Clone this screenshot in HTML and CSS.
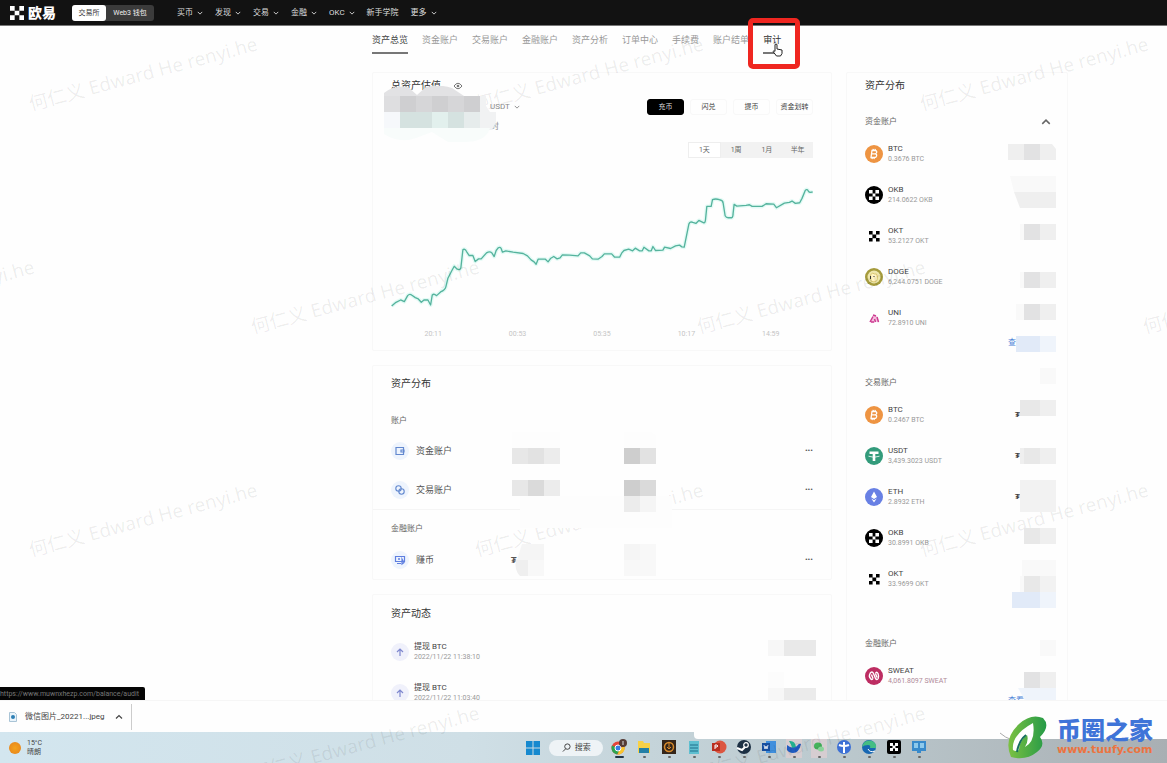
FILE: index.html
```
<!DOCTYPE html>
<html lang="zh-CN">
<head>
    <meta charset="UTF-8">
    <meta name="viewport" content="width=device-width, initial-scale=1.0">
    <title>欧易 - 资产总览</title>
    <link rel="stylesheet" href="styles.css">
</head>
<body>
    <!-- Icons used more than once -->
    <svg class="defs" aria-hidden="true">
        <symbol id="down" viewBox="0 0 8 8"><path d="M1 2.5l3 3 3-3" fill="none" stroke="currentColor" stroke-width="1.2"/></symbol>
        <symbol id="up" viewBox="0 0 8 8"><path d="M1 5.5l3-3 3 3" fill="none" stroke="currentColor" stroke-width="1.2"/></symbol>
        <symbol id="okx" viewBox="0 0 15 15"><path d="M0 0h5v5H0zM10 0h5v5h-5zM5 5h5v5H5zM0 10h5v5H0zM10 10h5v5h-5z"/></symbol>
        <symbol id="btc" viewBox="0 0 18 18">
            <circle cx="9" cy="9" r="9" fill="#ee9442"/>
            <path d="M7 5.5h3.2q1.8.2 1.5 1.8-.3 1.3-1.7 1.5 2 .2 1.6 2-.4 1.7-2.3 1.7H6zM8 5.300l.3-1.500M10 5.300l.3-1.500M7 14l.3-1.500M9 14l.3-1.500M7 8.900h3" fill="none" stroke="#fff" stroke-width="1.300"/>
        </symbol>
        <symbol id="okb" viewBox="0 0 18 18">
            <circle cx="9" cy="9" r="9"/>
            <path d="M4 4h3.600v3.600H4zM10.400 4H14v3.600h-3.600zM7.600 7.600h2.800v2.800H7.600zM4 10.400h3.600V14H4zM10.400 10.400H14V14h-3.600z" fill="#fff"/>
        </symbol>
        <symbol id="okt" viewBox="0 0 18 18">
            <path d="M4 4h3.600v3.600H4zM11 4h3.600v3.600H11zM7.400 7.400h3.800v3.800H7.400zM4 11h3.600v3.600H4zM11 11h3.600v3.600H11z"/>
        </symbol>
        <symbol id="send" viewBox="0 0 18 18">
            <circle cx="9" cy="9" r="9" fill="#f0f1fb"/>
            <path d="M9 13V6M6 9l3-3 3 3" fill="none" stroke="#7f88cf" stroke-width="1.200"/>
        </symbol>
    </svg>

    <header class="topbar">
        <a class="brand" href="#"><svg class="brand-icon"><use href="#okx"/></svg>欧易</a>
        <div class="switch">
            <button class="on">交易所</button>
            <button>Web3 钱包</button>
        </div>
        <nav class="menu">
            <a href="#">买币<svg><use href="#down"/></svg></a>
            <a href="#">发现<svg><use href="#down"/></svg></a>
            <a href="#">交易<svg><use href="#down"/></svg></a>
            <a href="#">金融<svg><use href="#down"/></svg></a>
            <a href="#">OKC<svg><use href="#down"/></svg></a>
            <a href="#">新手学院</a>
            <a href="#">更多<svg><use href="#down"/></svg></a>
        </nav>
    </header>

    <main class="page">
        <nav class="tabs">
            <a class="current" href="#">资产总览</a>
            <a href="#">资金账户</a>
            <a href="#">交易账户</a>
            <a href="#">金融账户</a>
            <a href="#">资产分析</a>
            <a href="#">订单中心</a>
            <a href="#">手续费</a>
            <a href="#">账户结单</a>
            <a class="hovered" href="#">审计
                <span class="highlight"></span>
                <svg class="cursor" viewBox="0 0 12 14"><path d="M3 8V1.500q1-1 2 0V6l5 1v3.500L8.500 13h-4L1 8.500q.8-1.200 2-.2z" fill="#fff" stroke="#222" stroke-width="1"/></svg>
            </a>
        </nav>

        <div class="columns">
            <div class="left">
                <section class="card total">
                    <h2>总资产估值
                        <svg class="eye" viewBox="0 0 10 8"><path d="M1 4q4-5.500 8 0-4 5.500-8 0z" fill="none" stroke="#777" stroke-width="1"/><circle cx="5" cy="4" r="1.300" fill="#777"/></svg>
                    </h2>
                    <div class="total-row">
                        <button class="unit">USDT<svg><use href="#down"/></svg></button>
                        <div class="actions">
                            <button class="dark">充币</button>
                            <button>闪兑</button>
                            <button>提币</button>
                            <button>资金划转</button>
                        </div>
                    </div>
                    <p class="change">24小时</p>
                    <div class="range">
                        <button class="on">1天</button>
                        <button>1周</button>
                        <button>1月</button>
                        <button>半年</button>
                    </div>
                    <svg class="chart" viewBox="63 40 1268 380" preserveAspectRatio="none">
                        <path class="glow" d="M65 408L78 397 92 390 103 395 113 377Q119 370 126 376L136 383 145 387 154 397 162 390H174L182 405 187 375Q192 370 200 377L212 366Q226 360 228 350L234 325 246 302 253 289 262 298Q271 302 273 293L279 240Q284 235 290 245L298 257H309L316 275 326 267H334L350 249Q360 243 366 249L373 260 379 242 385 234Q391 230 394 236L398 247 408 243 430 247 460 251 473 258 484 270 493 276 499 283 505 268H527L535 276 542 266 552 260 562 267 571 264 578 255 600 256 625 258 633 249H644L660 258 668 267 685 268 697 260 704 252H726L735 262 750 262 756 250 763 242 777 238 789 243 797 235 810 243 818 243 823 232 838 243 845 243 850 230 858 242 880 241 885 232 903 236 918 228 930 226 937 231 944 232 958 163Q962 154 970 158L979 161 988 152 1003 159Q1007 160 1008 150L1012 110H1025L1029 90Q1038 86 1050 90 1060 91 1061 100L1067 138Q1070 144 1076 144H1087Q1091 142 1091 130L1094 104 1102 109 1130 107 1140 105 1148 110H1178L1190 102 1213 103 1221 114 1245 100 1260 98 1268 94 1278 101 1291 99 1298 86 1308 62Q1313 56 1318 66L1322 68 1330 67"/>
                        <path d="M65 408L78 397 92 390 103 395 113 377Q119 370 126 376L136 383 145 387 154 397 162 390H174L182 405 187 375Q192 370 200 377L212 366Q226 360 228 350L234 325 246 302 253 289 262 298Q271 302 273 293L279 240Q284 235 290 245L298 257H309L316 275 326 267H334L350 249Q360 243 366 249L373 260 379 242 385 234Q391 230 394 236L398 247 408 243 430 247 460 251 473 258 484 270 493 276 499 283 505 268H527L535 276 542 266 552 260 562 267 571 264 578 255 600 256 625 258 633 249H644L660 258 668 267 685 268 697 260 704 252H726L735 262 750 262 756 250 763 242 777 238 789 243 797 235 810 243 818 243 823 232 838 243 845 243 850 230 858 242 880 241 885 232 903 236 918 228 930 226 937 231 944 232 958 163Q962 154 970 158L979 161 988 152 1003 159Q1007 160 1008 150L1012 110H1025L1029 90Q1038 86 1050 90 1060 91 1061 100L1067 138Q1070 144 1076 144H1087Q1091 142 1091 130L1094 104 1102 109 1130 107 1140 105 1148 110H1178L1190 102 1213 103 1221 114 1245 100 1260 98 1268 94 1278 101 1291 99 1298 86 1308 62Q1313 56 1318 66L1322 68 1330 67"/>
                    </svg>
                    <div class="axis">
                        <span>20:11</span><span>00:53</span><span>05:35</span><span>10:17</span><span>14:59</span>
                    </div>
                    <svg class="mosaic mosaic-total" viewBox="0 0 116 56">
                        <path fill="#e2e2e4" d="M0 10V7Q10-1 24 1L33 9 42 1Q56-2 68 2L80 10z"/>
                        <path fill="#dedee0" d="M0 10h16v16H0z"/><path fill="#cfcfd1" d="M16 10h16v16H16zM48 10h16v16H48zM80 10h16v16H80z"/><path fill="#d6d6d8" d="M32 10h16v16H32zM64 10h16v16H64z"/>
                        <path fill="#f6f8fb" d="M0 26h16v16H0z"/><path fill="#d5e2e0" d="M16 26h32v16H16zM64 26h16v16H64z"/><path fill="#e2f0ed" d="M48 26h16v16H48z"/><path fill="#e6ecec" d="M80 26h16v16H80z"/><path fill="#f1f2f3" d="M96 10h6v10l4 6h6v10l-4 8H96z"/>
                        <path fill="#f8fcfb" d="M0 42h106q-4 14-26 14H64L48 46 32 52q-16 6-32-4z"/>
                    </svg>
                </section>

                <section class="card spread">
                    <h2>资产分布</h2>
                    <h3>账户</h3>
                    <ul>
                        <li>
                            <svg class="round" viewBox="0 0 18 18"><circle cx="9" cy="9" r="9" fill="#eef4fd"/><path d="M5 5.500h7.500v7H5zM10 8h3v2h-3z" fill="none" stroke="#6288cf" stroke-width="1.200"/></svg>
                            <a href="#">资金账户</a><button class="more" aria-label="更多">•••</button>
                        </li>
                        <li>
                            <svg class="round" viewBox="0 0 18 18"><circle cx="9" cy="9" r="9" fill="#eef4fd"/><circle cx="7.500" cy="7.500" r="2.700" fill="none" stroke="#6288cf" stroke-width="1.100"/><circle cx="10.500" cy="10.500" r="2.700" fill="none" stroke="#6288cf" stroke-width="1.100"/></svg>
                            <a href="#">交易账户</a><button class="more" aria-label="更多">•••</button>
                        </li>
                    </ul>
                    <h3 class="ruled">金融账户</h3>
                    <ul>
                        <li>
                            <svg class="round" viewBox="0 0 18 18"><circle cx="9" cy="9" r="9" fill="#eef4fd"/><path d="M4.500 5.500h9v5h-9zM6 12.500h4M11 8v5l2-1.500z" fill="none" stroke="#5f7fe0" stroke-width="1.200"/><circle cx="8" cy="8" r="1" fill="#5f7fe0"/></svg>
                            <a href="#">赚币</a><b>₮</b><button class="more" aria-label="更多">•••</button>
                        </li>
                    </ul>
                    <svg class="mosaic mosaic-spread" viewBox="0 0 176 144">
                        <path fill="#fdfdfd" d="M0 0h48v16H0zM112 0h26l6 4v12h-32zM16 80h144v16H16zM8 64h152v32H8z"/>
                        <path fill="#e7e7e7" d="M0 16h16v16H0zM0 48h16v16H0z"/><path fill="#e2e2e2" d="M16 16h16v16H16zM128 16h16v16h-16z"/><path fill="#ececec" d="M32 16h16v16H32zM32 48h16v16H32zM112 64h16v16h-16z"/><path fill="#dadada" d="M16 48h16v16H16zM128 48h16v16h-16z"/><path fill="#cecece" d="M112 16h16v16h-16zM112 48h16v16h-16z"/><path fill="#f5f5f5" d="M128 64h16v16h-16zM10 112h22v16H5zM112 112h16v16h-16z"/><path fill="#efefef" d="M4 128h12v16H8q-6-6-4-16z"/><path fill="#f8f8f8" d="M16 128h16v16H16zM128 112h16v32h-16zM112 128h16v16h-16z"/>
                    </svg>
                </section>

                <section class="card activity">
                    <h2>资产动态</h2>
                    <ul>
                        <li><svg class="round"><use href="#send"/></svg><div><strong>提现 BTC</strong><time>2022/11/22 11:38:10</time></div></li>
                        <li><svg class="round"><use href="#send"/></svg><div><strong>提现 BTC</strong><time>2022/11/22 11:03:40</time></div></li>
                    </ul>
                    <svg class="mosaic mosaic-activity" viewBox="0 0 48 64">
                        <path fill="#f7f7f7" d="M0 0h16v16H0zM0 48h16v16H0z"/><path fill="#e9e9e9" d="M16 0h32v16H16z"/><path fill="#ebebeb" d="M16 48h32v16H16z"/><path fill="#fcfcfc" d="M0 32h16v16H0z"/>
                    </svg>
                </section>
            </div>

            <aside class="card side">
                <h2>资产分布</h2>
                <section>
                    <h3>资金账户<svg><use href="#up"/></svg></h3>
                    <ul>
                        <li><svg class="coin"><use href="#btc"/></svg><div><strong>BTC</strong><span>0.3676 BTC</span></div></li>
                        <li><svg class="coin"><use href="#okb"/></svg><div><strong>OKB</strong><span>214.0622 OKB</span></div></li>
                        <li><svg class="coin"><use href="#okt"/></svg><div><strong>OKT</strong><span>53.2127 OKT</span></div></li>
                        <li>
                            <svg class="coin" viewBox="0 0 18 18"><circle cx="9" cy="9" r="9" fill="#a59b3c"/><circle cx="9" cy="9" r="6.500" fill="#eee6ad"/><path d="M5.500 7l2-2 2 1h2l1 3-.5 3.500-3 1.500-3-1z" fill="#fff3c4" stroke="#d2bd5d" stroke-width=".8"/><path d="M5 8h1v3H5zM8.500 8h1v1h-1z" fill="#333"/></svg>
                            <div><strong>DOGE</strong><span>6,244.0751 DOGE</span></div>
                        </li>
                        <li>
                            <svg class="coin" viewBox="0 0 18 18"><path d="M5.500 13L8 7.500l2-2 2.500 3 1.500 5-3-1-1.500 1z" fill="#f5c1df"/><path d="M5 13l3-5.500M8 6l3 1M12 8l1.500 5M6 13h3M10.500 13l-1-3" stroke="#cc3b91" stroke-width="1.500" fill="none"/></svg>
                            <div><strong>UNI</strong><span>72.8910 UNI</span></div>
                        </li>
                    </ul>
                    <a class="all" href="#">查看更多资产</a>
                </section>
                <section>
                    <h3>交易账户</h3>
                    <ul>
                        <li><svg class="coin"><use href="#btc"/></svg><div><strong>BTC</strong><span>0.2467 BTC</span></div><b>₮</b></li>
                        <li>
                            <svg class="coin" viewBox="0 0 18 18"><circle cx="9" cy="9" r="9" fill="#339b7b"/><path d="M4.500 4.500h9v2.500h-3.200v7H7.700V7H4.500z" fill="#fff"/><path d="M3.500 9.200q5.500 2.200 11 0" fill="none" stroke="#fff" stroke-width=".8"/></svg>
                            <div><strong>USDT</strong><span>3,439.3023 USDT</span></div><b>₮</b>
                        </li>
                        <li>
                            <svg class="coin" viewBox="0 0 18 18"><circle cx="9" cy="9" r="9" fill="#6880e4"/><path d="M9 3.500l3 5.500-3 2-3-2zM6.300 10.500L9 12.300l2.700-1.800L9 14.500z" fill="#fff"/></svg>
                            <div><strong>ETH</strong><span>2.8932 ETH</span></div><b>₮</b>
                        </li>
                        <li><svg class="coin"><use href="#okb"/></svg><div><strong>OKB</strong><span>30.8991 OKB</span></div></li>
                        <li><svg class="coin"><use href="#okt"/></svg><div><strong>OKT</strong><span>33.9699 OKT</span></div></li>
                    </ul>
                </section>
                <section>
                    <h3>金融账户</h3>
                    <ul>
                        <li>
                            <svg class="coin" viewBox="0 0 18 18"><circle cx="9" cy="9" r="9" fill="#bd2d62"/><path d="M5 6.500q2-3 3.500 0l2 5q1.500 2 2.700 0 1-2-.2-5-1.500-2.500-2.500 0M5 6.500q-1.500 3 .5 5 1.500 2 2.500 0M6.500 7.500l1.500 4M10.500 6.500l1.500 4" fill="none" stroke="#fff" stroke-width="1.400"/></svg>
                            <div><strong>SWEAT</strong><span class="rose">4,061.8097 SWEAT</span></div>
                        </li>
                    </ul>
                    <a class="all" href="#">查看更多资产</a>
                </section>
                <svg class="mosaic mosaic-side" viewBox="0 0 48 560">
                    <path fill="#efefef" d="M0 0h16v16H0zM32 0h12l4 5v11H32zM6 48h42v16H12zM32 80h16v16H32zM32 128h16v16H32zM32 160h16v16H32zM32 256h16v16H32zM12 304h36v16H12zM32 384h16v16H32zM32 528h16v16H32z"/>
                    <path fill="#e2e2e3" d="M16 0h16v16H16zM16 80h16v16H16zM16 128h16v16H16zM16 160h16v16H16zM16 528h16v16H16z"/>
                    <path fill="#e8e8e8" d="M12 256h20v16H12zM16 304h16v16H16zM16 384h16v16H16zM16 432h16v16H16z"/>
                    <path fill="#f9f9f9" d="M2 32h46v16H6zM12 80h4v16h-4zM12 128h4v16h-4zM8 160h8v16H8zM32 224h16v16H32zM14 416h34v16H14zM12 432h4v16h-4zM32 496h16v16H32z"/>
                    <path fill="#f2f2f2" d="M12 336h36v32H12zM32 432h16v16H32z"/>
                    <path fill="#e1eaf8" d="M8 192h24v16H8zM4 448h28v16H4z"/><path fill="#eff4fb" d="M32 192h16v16H32zM32 448h16v16H32zM10 544h38v14H18z"/>
                </svg>
            </aside>
        </div>
        <div class="status">https://www.muwnxhezp.com/balance/audit</div>
    </main>

    <!-- Download shelf -->
    <div class="shelf">
        <a class="file" href="#">
            <svg viewBox="0 0 8 10"><path d="M.5.5h5l2 2v7h-7z" fill="#eaf4fb" stroke="#a9c4d6"/><circle cx="4" cy="5" r="2" fill="#2d7fb5"/></svg>
            微信图片_20221...jpeg
        </a>
        <button aria-label="展开"><svg><use href="#up"/></svg></button>
    </div>

    <footer class="taskbar">
        <div class="weather"><i></i><div>15°C<br>晴朗</div></div>
        <div class="dock">
            <svg viewBox="0 0 16 16"><path d="M1 1h6.500v6.500H1zM8.500 1H15v6.500H8.500zM1 8.500h6.500V15H1zM8.500 8.500H15V15H8.500z" fill="#1689cf"/></svg>
            <button class="search"><svg viewBox="0 0 10 10"><circle cx="6" cy="4" r="3" fill="none" stroke="#333"/><path d="M4 6.500L1 9.500" stroke="#333"/></svg>搜索</button>
            <div class="apps">
                <span class="active"><svg viewBox="0 0 16 16"><circle cx="7" cy="9" r="6.500" fill="#e5453a"/><path d="M1 6.500A6.500 6.500 0 0 0 6 15.400L9.500 10z" fill="#2da44f"/><path d="M13.300 7A6.500 6.500 0 0 1 6.500 15.500L9.500 9z" fill="#f8c52c"/><circle cx="7" cy="9" r="3" fill="#367ee5" stroke="#fff"/><circle cx="12" cy="4" r="4" fill="#553b36"/><path d="M12 2v4" stroke="#ddd"/></svg></span>
                <span><svg viewBox="0 0 16 16"><path d="M2 2h5l1 2h6v10H2z" fill="#f8d146"/><path d="M3 9h10v5H3z" fill="#247fa5"/></svg></span>
                <span><svg viewBox="0 0 16 16"><path d="M1 1h14v14H1z" fill="#35261a"/><circle cx="8" cy="8" r="4.500" fill="none" stroke="#d88b2c" stroke-width="1.500"/><path d="M8 4v6M6 8l2 2 2-2" fill="none" stroke="#d88b2c"/></svg></span>
                <span><svg viewBox="0 0 16 16"><path d="M3 2h10v13H3z" fill="#5fbfd0"/><path d="M4 6h8M4 9h8M4 12h8" stroke="#216f8b"/></svg></span>
                <span><svg viewBox="0 0 16 16"><circle cx="9" cy="8" r="6.500" fill="#dc5640"/><path d="M1 4h8v8H1z" fill="#b92f20"/><path d="M4 10V6h2q1.500 1 0 2H4" fill="none" stroke="#fff"/></svg></span>
                <span><svg viewBox="0 0 16 16"><circle cx="8" cy="8" r="7" fill="#1c3044"/><path d="M1 9l5 2 4-4" stroke="#fff" stroke-width="2" fill="none"/><circle cx="10" cy="6" r="2.300" fill="#1c3044" stroke="#fff" stroke-width="1.200"/></svg></span>
                <span><svg viewBox="0 0 16 16"><path d="M5 2h10v12H5z" fill="#3f8fdd"/><path d="M1 4h8v8H1z" fill="#174f9f"/><path d="M3 6l1 4 1-3 1 3 1-4" stroke="#fff" stroke-width=".8" fill="none"/></svg></span>
                <span class="alert"><svg viewBox="0 0 16 16"><path d="M3 2q6-1 7 6L7 11Q5 5 3 2z" fill="#23b08f"/><path d="M1 6q6 5 10 1 2-3 4-2-2 9-8 9-4 0-6-3z" fill="#215bc0"/></svg></span>
                <span class="alert"><svg viewBox="0 0 16 16"><ellipse cx="7" cy="7" rx="4" ry="3.500" fill="#45b35b"/><ellipse cx="10" cy="10" rx="3" ry="2.500" fill="#8ad39a"/></svg></span>
                <span><svg viewBox="0 0 16 16"><circle cx="8" cy="8" r="7" fill="#3c70d5"/><path d="M8 3v11M3 6q5 2 10 0" stroke="#fff" stroke-width="2" fill="none"/></svg></span>
                <span><svg viewBox="0 0 16 16"><circle cx="8" cy="8" r="7" fill="#1767b2"/><path d="M1 8q2-8 10-6 5 2 4 7H9q1-3-2-3-4 0-6 2z" fill="#45bd83"/><path d="M7 10q2 4 7 2" stroke="#fff" fill="none"/></svg></span>
                <span><svg viewBox="0 0 16 16"><rect x="1" y="1" width="14" height="14" rx="2"/><path d="M4 4h3v3H4zM9 4h3v3H9zM6.500 6.500h3v3h-3zM4 9h3v3H4zM9 9h3v3H9z" fill="#fff"/></svg></span>
                <span><svg viewBox="0 0 16 16"><path d="M1 2h14v10H1zM6 12h4v2H6z" fill="#388acb"/><path d="M3 4h4v5H3zM9 4h4v5H9z" fill="#8ec9eb"/></svg></span>
            </div>
        </div>
        <div class="sheet"></div>
    </footer>

    <svg class="watermark" aria-hidden="true">
        <text transform="translate(31 111) rotate(-15)">何仁义 Edward He renyi.he</text>
        <text transform="translate(477 111) rotate(-15)">何仁义 Edward He renyi.he</text>
        <text transform="translate(922 111) rotate(-15)">何仁义 Edward He renyi.he</text>
        <text transform="translate(-192 334) rotate(-15)">何仁义 Edward He renyi.he</text>
        <text transform="translate(253 334) rotate(-15)">何仁义 Edward He renyi.he</text>
        <text transform="translate(699 334) rotate(-15)">何仁义 Edward He renyi.he</text>
        <text transform="translate(1145 334) rotate(-15)">何仁义 Edward He renyi.he</text>
        <text transform="translate(31 557) rotate(-15)">何仁义 Edward He renyi.he</text>
        <text transform="translate(477 557) rotate(-15)">何仁义 Edward He renyi.he</text>
        <text transform="translate(922 557) rotate(-15)">何仁义 Edward He renyi.he</text>
        <text transform="translate(253 780) rotate(-15)">何仁义 Edward He renyi.he</text>
        <text transform="translate(699 780) rotate(-15)">何仁义 Edward He renyi.he</text>
    </svg>

    <a class="stamp" href="#">
        <svg viewBox="0 0 50 44">
            <defs><linearGradient id="leaf" x1="0" y1="0" x2="1" y2="0"><stop offset="0" stop-color="#7cc142"/><stop offset="1" stop-color="#259a47"/></linearGradient></defs>
            <path d="M1 18q6 5 10 6M18 24q8-1 10-6" fill="none" stroke="#aaa"/>
            <path d="M12 42Q4 24 20 9 32-2 44 3q8 8-3 19 6 8-3 15-11 9-26 5z" fill="url(#leaf)"/>
            <path d="M14 35Q12 20 34 8q3 18-8 24 4-7 2-12-8 6-8 15-3 2-6 0z" fill="#fff"/>
            <path d="M18 37q2-12 9-17" fill="none" stroke="#176e60" stroke-width="2"/>
        </svg>
        <span><strong>币圈之家</strong><em>www.tuufy.com</em></span>
    </a>
</body>
</html>
```
FILE: styles.css
```
* {
    box-sizing: border-box;
    margin: 0;
    padding: 0;
}

body {
    position: relative;
    display: flex;
    flex-direction: column;
    height: 100vh;
    overflow: hidden;
    background: #fefefe;
    color: #444;
    font-family: Roboto, "Noto Sans CJK SC", sans-serif;
    font-size: 8px;
    line-height: 10px;
}

a {
    color: inherit;
    text-decoration: none;
}

button {
    border: 0;
    background: none;
    color: inherit;
    font: inherit;
}

ul {
    list-style: none;
}

h2 {
    font-size: 10px;
    font-weight: 400;
    line-height: 14px;
    color: #333;
}

h3 {
    font-size: 8px;
    font-weight: 400;
    color: #666;
}

svg {
    display: block;
    flex: none;
}

.defs {
    position: absolute;
    width: 0;
    height: 0;
}

/* Top bar */
.topbar {
    display: flex;
    align-items: center;
    flex: none;
    height: 26px;
    padding: 0 10px;
    background: #121212;
    border-bottom: 1px solid #777;
    color: #ddd;
}

.brand {
    display: flex;
    align-items: center;
    gap: 4px;
    width: 62px;
    color: #fff;
    font-size: 14px;
    font-weight: 900;
}

.brand-icon {
    width: 14px;
    height: 14px;
    fill: #fff;
}

.switch {
    display: flex;
    border-radius: 3px;
    background: #3b3b3b;
}

.switch button {
    width: 48px;
    height: 16px;
    border-radius: 3px;
    color: #eee;
    font-size: 7px;
}

.switch .on {
    width: 34px;
    background: #fff;
    color: #333;
}

.menu {
    display: flex;
    gap: 12px;
    margin-left: 23px;
}

.menu a {
    display: flex;
    align-items: center;
    gap: 4px;
}

.menu svg {
    width: 6px;
    height: 6px;
}

/* Page */
.page {
    position: relative;
    display: flex;
    flex-direction: column;
    flex: 1;
    min-height: 0;
    border-bottom: 1px solid #f6f6f6;
}

.tabs {
    display: flex;
    flex: none;
    gap: 14px;
    height: 28px;
    padding-left: 372px;
    color: #999;
    font-size: 9px;
    line-height: 28px;
}

.tabs .current {
    border-bottom: 2px solid #777;
    color: #444;
}

.tabs .hovered {
    position: relative;
    border-bottom: 2px solid #777;
    color: #333;
}

/* Red frame and pointer on the hovered tab */
.highlight {
    position: absolute;
    z-index: 5;
    top: -8px;
    left: -15px;
    width: 52px;
    height: 51px;
    border: 5px solid #ef2620;
    border-radius: 5px;
}

.cursor {
    position: absolute;
    z-index: 5;
    top: 17px;
    left: 9px;
    width: 12px;
    height: 14px;
}

.columns {
    display: grid;
    grid-template-columns: 460fr 222fr;
    gap: 14px;
    flex: 1;
    min-height: 0;
    overflow: hidden;
    padding: 18px 99px 0 372px;
}

.left {
    display: flex;
    flex-direction: column;
    gap: 14px;
}

.card {
    position: relative;
    border: 1px solid #f8f8f8;
    border-radius: 2px;
    padding: 6px 18px 0;
}

.mosaic {
    position: absolute;
    z-index: 3;
}

/* Total balance */
.total {
    flex: none;
    height: 279px;
}

.total h2 {
    display: flex;
    align-items: center;
    gap: 12px;
}

.eye {
    width: 10px;
    height: 8px;
}

.total-row {
    display: flex;
    justify-content: space-between;
    align-items: center;
    margin-top: 6px;
}

.unit {
    display: flex;
    align-items: center;
    gap: 4px;
    margin-left: 99px;
    color: #888;
}

.unit svg {
    width: 6px;
    height: 6px;
}

.actions {
    display: flex;
    gap: 6px;
}

.actions button {
    width: 37px;
    height: 16px;
    border: 1px solid #f8f8f8;
    border-radius: 3px;
    font-size: 7px;
    white-space: nowrap;
}

.actions .dark {
    background: #000;
    border-color: #000;
    color: #ddd;
}

.change {
    margin: 7px 0 0 83px;
    color: #888;
}

.range {
    display: flex;
    width: 125px;
    margin: 10px 0 0 auto;
    background: #f2f2f2;
}

.range button {
    flex: 1;
    height: 16px;
    font-size: 7px;
    color: #666;
}

.range .on {
    border: 1px solid #eee;
    background: #fff;
}

.chart {
    width: 100%;
    height: 127px;
    margin-top: 25px;
    fill: none;
    stroke: #55b39d;
    stroke-width: 4;
    stroke-linejoin: round;
}

.chart .glow {
    stroke: #e3faf5;
    stroke-width: 12;
}

.axis {
    display: flex;
    justify-content: space-around;
    margin-top: 19px;
    color: #c4c4c4;
    font-size: 7px;
}

.mosaic-total {
    top: 13px;
    left: 11px;
    width: 116px;
    height: 56px;
}

/* Accounts */
.spread {
    flex: none;
    height: 215px;
    padding-top: 11px;
}

.spread h3 {
    margin: 25px 0 5px;
}

.spread li {
    display: flex;
    align-items: center;
    height: 39px;
    color: #555;
    font-size: 9px;
}

.spread .ruled {
    margin: 0 -18px 6px;
    padding: 14px 18px 0;
    border-top: 1px solid #f5f5f5;
}

.round {
    width: 18px;
    height: 18px;
}

.spread a {
    width: 95px;
    margin-left: 7px;
}

.more {
    margin-left: auto;
    font-size: 8px;
}

.mosaic-spread {
    top: 66px;
    left: 139px;
    width: 176px;
    height: 144px;
}

/* History */
.activity {
    flex: none;
    height: 180px;
    padding-top: 12px;
}

.activity ul {
    margin-top: 10px;
}

.activity li,
.side li {
    display: flex;
    align-items: center;
    gap: 5px;
    height: 41px;
}

strong {
    display: block;
    font-weight: 400;
    color: #444;
}

time,
.side span {
    display: block;
    color: #999;
    font-size: 7px;
}

.side .rose {
    color: #b08a99;
}

.mosaic-activity {
    top: 45px;
    right: 15px;
    width: 48px;
    height: 64px;
}

/* Side panel */
.side {
    height: 660px;
    padding: 6px 11px 0 18px;
}

.side section {
    height: 261px;
}

.side h2 {
    margin-bottom: 24px;
}

.side h3 {
    display: flex;
    justify-content: space-between;
    align-items: center;
    padding-right: 5px;
    height: 10px;
    margin-bottom: 6px;
}

.side h3 svg {
    width: 10px;
    height: 10px;
}

.coin {
    width: 18px;
    height: 18px;
}

.side b {
    margin-left: auto;
    padding-right: 36px;
}

.all {
    display: block;
    text-align: right;
    color: #4d83d8;
}

.mosaic-side {
    top: 71px;
    right: 11px;
    width: 48px;
    height: 560px;
}

.status {
    position: absolute;
    bottom: 0;
    left: 0;
    padding: 2px 6px 1px 0;
    border-radius: 0 2px 0 0;
    background: #050505;
    color: #777;
    font-size: 7px;
}

/* Download shelf */
.shelf {
    display: flex;
    align-items: center;
    flex: none;
    height: 31px;
}

.file {
    display: flex;
    align-items: center;
    gap: 8px;
    padding-left: 9px;
}

.file svg {
    width: 8px;
    height: 10px;
}

.shelf button {
    width: 27px;
    height: 26px;
    padding-left: 10px;
    border-right: 1px solid #ccc;
}

.shelf button svg {
    width: 8px;
    height: 8px;
}

/* Taskbar */
.taskbar {
    position: relative;
    display: flex;
    flex: none;
    height: 31px;
    background: linear-gradient(90deg, #d3e6ef 0%, #cfdfe6 40%, #bccacf 70%, #a9afb3 100%);
}

.weather {
    display: flex;
    align-items: center;
    gap: 6px;
    width: 45%;
    padding-left: 9px;
    font-size: 7px;
    line-height: 9px;
}

.weather i {
    width: 12px;
    height: 12px;
    border-radius: 50%;
    background: radial-gradient(#f4a21c, #e5811d);
}

.dock {
    display: flex;
    align-items: center;
    gap: 8px;
}

.dock svg {
    width: 16px;
    height: 16px;
}

.dock .search {
    display: flex;
    align-items: center;
    justify-content: center;
    gap: 4px;
    width: 54px;
    height: 16px;
    border-radius: 8px;
    background: #eef3f6;
}

.dock .search svg {
    width: 9px;
    height: 9px;
}

.apps {
    display: flex;
    gap: 9px;
}

.apps span {
    display: flex;
    flex-direction: column;
    align-items: center;
    gap: 1px;
    padding-top: 2px;
}

.apps span::after {
    content: "";
    width: 3px;
    height: 2px;
    border-radius: 1px;
    background: #666;
}

.apps .active::after {
    width: 9px;
    background: #234;
}

.apps .alert {
    background: #d6cdd1;
}

.sheet {
    position: absolute;
    top: 0;
    left: 694px;
    right: 0;
    height: 7px;
    border-radius: 0 0 0 4px;
    background: #fefefe;
}

.watermark {
    position: absolute;
    z-index: 2;
    inset: 0;
    width: 100%;
    height: 100%;
    pointer-events: none;
    fill: rgba(0, 0, 0, 0.07);
    font-family: "Noto Sans", "Noto Sans CJK SC", sans-serif;
    font-size: 19px;
}

/* Site stamp in the corner */
.stamp {
    position: absolute;
    z-index: 4;
    right: 14px;
    bottom: 4px;
    display: flex;
    align-items: center;
    gap: 8px;
}

.stamp > svg {
    width: 50px;
    height: 44px;
}

.stamp strong,
.stamp em {
    display: block;
    font-weight: 900;
}

.stamp strong {
    color: #3f74d8;
    font-size: 24px;
    line-height: 26px;
}

.stamp em {
    color: #ec7440;
    font-family: "DejaVu Sans", sans-serif;
    font-size: 11px;
    font-style: normal;
    font-weight: 700;
    line-height: 12px;
}
```
